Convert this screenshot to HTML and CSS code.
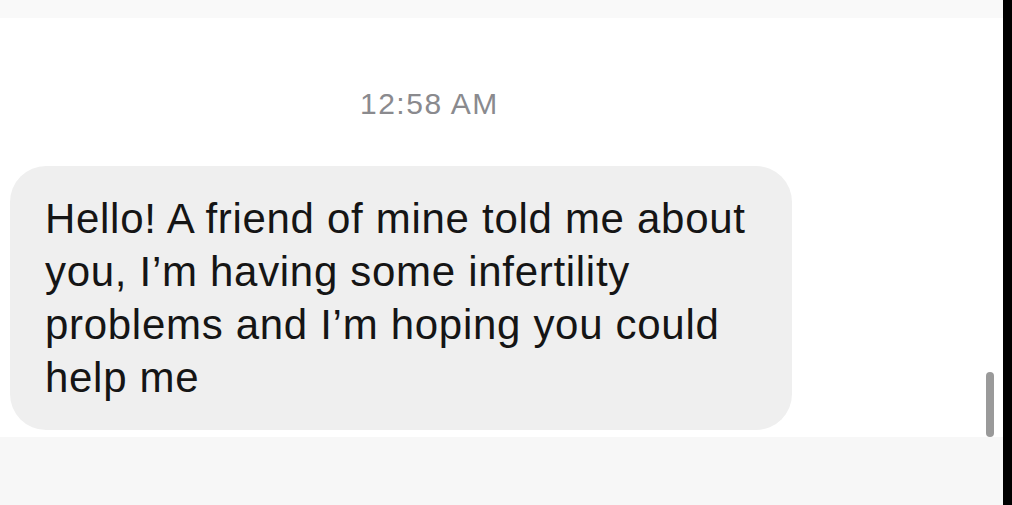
FILE: index.html
```html
<!DOCTYPE html>
<html lang="en">

<head>
    <meta charset="UTF-8">
    <meta name="viewport" content="width=device-width, initial-scale=1.0">
    <title>Messages</title>
    <link rel="stylesheet" href="styles.css">
</head>

<body>
    <div class="screen">
        <div class="phone">
            <div class="top-bar"></div>

            <div class="thread">
                <div class="timestamp">12:58 AM</div>
                <div class="bubble">
                    Hello! A friend of mine told me about you, I’m having some infertility problems and I’m hoping you could help me
                </div>
                <div class="scrollbar"></div>
            </div>

            <!-- composer area -->
            <div class="composer"></div>
        </div>
        <div class="edge"></div>
    </div>
</body>

</html>
```

FILE: styles.css
```css
body {
    margin: 0;
    padding: 0;
    background: #ffffff;
    font-family: 'Liberation Sans', Arial, sans-serif;
}

.screen {
    display: flex;
    width: 1012px;
    height: 505px;
    overflow: hidden;
}

.phone {
    flex: 1;
    display: flex;
    flex-direction: column;
}

.edge {
    width: 9px;
    background: #000000;
}

.top-bar {
    height: 18px;
    background-color: #f9f9f9;
}

.thread {
    flex: 1;
    position: relative;
    padding: 0 0 7px 10px;
    display: flex;
    flex-direction: column;
}

.timestamp {
    padding-left: 350px;
    margin-top: 70px;
    font-size: 30px;
    letter-spacing: 1.5px;
    color: #8a8a8e;
    line-height: 32px;
}

.bubble {
    margin-top: auto;
    width: 712px;
    padding: 26px 35px;
    background-color: #efefef;
    border-radius: 36px;
    font-size: 42px;
    letter-spacing: 0.7px;
    line-height: 53px;
    color: #151515;
}

.scrollbar {
    position: absolute;
    right: 9px;
    bottom: 0;
    width: 8px;
    height: 65px;
    border-radius: 4px;
    background-color: #9a9a9a;
}

.composer {
    height: 68px;
    background-color: #f7f7f7;
}
```
